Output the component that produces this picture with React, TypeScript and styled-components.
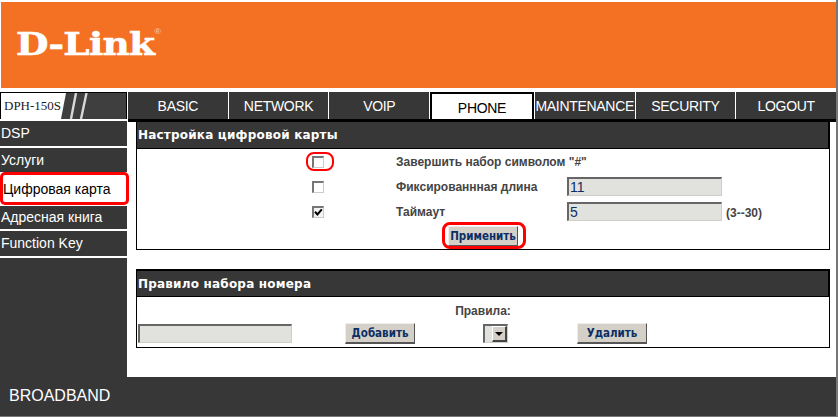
import React from 'react';
import styled, { createGlobalStyle } from 'styled-components';

const Global = createGlobalStyle`
  html, body { margin: 0; padding: 0; background: #fff; }
  body { font-family: "Liberation Sans", Arial, sans-serif; }
  * { box-sizing: border-box; }
`;

const Page = styled.div`
  position: relative;
  width: 838px;
  height: 417px;
  overflow: hidden;
  background: #fff;
  padding-top: 2px;
  border-right: 2px solid #777;
  border-bottom: 1px solid #777;
  display: flex;
  flex-direction: column;
`;

const Banner = styled.header`
  height: 86px;
  margin-left: 1px;
  background: #f47124;
  padding: 24px 0 0 15px;
  flex: none;
`;

const Logo = styled.div`
  color: #fff;
  font-family: "DejaVu Serif", serif;
  font-weight: 700;
  font-size: 32px;
  line-height: 36px;
  letter-spacing: -0.6px;
  display: flex;
  align-items: flex-start;
  transform: scaleX(1.17);
  transform-origin: left top;
  -webkit-text-stroke: 0.6px #fff;
`;

const Reg = styled.span`
  font-family: "Liberation Sans", sans-serif;
  font-weight: 400;
  font-size: 8px;
  line-height: 8px;
  color: #f9c9a6;
  margin-top: 2px;
  -webkit-text-stroke: 0;
`;

const TopRow = styled.div`
  margin-top: 4px;
  display: flex;
  gap: 1px;
  flex: none;
  height: 27px;
`;

const ModelBox = styled.div`
  width: 127px;
  flex: none;
  height: 27px;
  display: flex;
  align-items: center;
  padding-left: 3px;
  border-top: 1px solid #000;
  border-right: 1px solid #000;
  border-left: 1px solid #000;
  background: #fff;
  color: #222;
  font-family: "Liberation Serif", serif;
  font-size: 13px;
  position: relative;
`;

const Slashes = styled.svg`
  position: absolute;
  left: 60px;
  top: 0;
`;

const Tab = styled.div<{ $active?: boolean }>`
  flex: 1;
  min-width: 0;
  background: ${p => (p.$active ? '#fff' : '#373737')};
  color: ${p => (p.$active ? '#000' : '#fff')};
  border: ${p => (p.$active ? '2px solid #000' : 'none')};
  border-bottom: none;
  padding-top: ${p => (p.$active ? '3px' : '0')};
  font-size: 14px;
  letter-spacing: -0.3px;
  display: flex;
  align-items: center;
  justify-content: center;
  white-space: nowrap;
`;

const Body = styled.div`
  flex: 1;
  display: flex;
  min-height: 0;
`;

const Side = styled.nav`
  width: 127px;
  display: flex;
  flex-direction: column;
  gap: 2px;
  padding-top: 2px;
  flex: none;
`;

const SideItem = styled.div<{ $active?: boolean; $h?: number }>`
  height: ${p => p.$h ?? 25}px;
  background: ${p => (p.$active ? '#fff' : '#373737')};
  color: ${p => (p.$active ? '#000' : '#fff')};
  font-size: 14px;
  line-height: 16px;
  padding: ${p => (p.$active ? '7px 0 0 3px' : `${(p.$h ?? 25) === 23 ? 3 : 4}px 0 0 1px`)};
  white-space: nowrap;
`;

const SideFill = styled.div`
  flex: 1;
  background: #373737;
`;

const Main = styled.main`
  width: 708px;
  margin-left: 1px;
  flex: none;
  display: flex;
  flex-direction: column;
  background: linear-gradient(#000 0 3px, #fff 3px);
  padding-left: 8px;
  padding-right: 6px;
`;

const Section = styled.section<{ $h: number; $mt: number }>`
  height: ${p => p.$h}px;
  margin-top: ${p => p.$mt}px;
  border: 1px solid #000;
  flex: none;
  display: flex;
  flex-direction: column;
`;

const SectionHead = styled.h2<{ $top: number; $h: number }>`
  margin: -1px -1px 0 0;
  height: ${p => p.$h}px;
  flex: none;
  background: #373737;
  color: #fff;
  border-top: ${p => p.$top}px solid #000;
  border-right: 2px solid #000;
  border-bottom: 1px solid #000;
  font-family: "DejaVu Sans", sans-serif;
  font-size: 12px;
  font-weight: 700;
  letter-spacing: 0.2px;
  line-height: 26px;
  padding-left: 1px;
`;

const FormRow = styled.div`
  display: grid;
  grid-template-columns: 259px 171px 159px auto;
  align-items: center;
  height: 25px;
`;

const Check = styled.span<{ $on?: boolean }>`
  justify-self: start;
  margin-left: 175px;
  width: 12px;
  height: 12px;
  border-style: solid;
  border-width: 2px 1px 1px 2px;
  border-color: #777 #ccc #ccc #777;
  background: ${p => (p.$on ? '#f4f4f4' : '#fff')};
  display: flex;
  align-items: center;
  justify-content: center;
`;

const Label = styled.span`
  font-size: 12px;
  font-weight: 700;
  color: #444;
  white-space: nowrap;
`;

const Field = styled.div<{ $w: number }>`
  width: ${p => p.$w}px;
  height: 19px;
  background: #e1e1de;
  border-style: solid;
  border-width: 2px 1px 1px 2px;
  border-color: #666 #cfcfca #cfcfca #666;
  color: #0a2f66;
  font-size: 14px;
  line-height: 16px;
  padding-left: 1px;
`;

const Hint = styled.span`
  font-size: 12px;
  font-weight: 700;
  color: #444;
  padding-top: 3px;
`;

const ApplyRow = styled.div`
  display: flex;
  justify-content: center;
  padding-top: 2px;
`;

const Button = styled.div<{ $w: number }>`
  width: ${p => p.$w}px;
  height: 21px;
  background: #d4d0c8;
  border-right: 1px solid #555;
  border-bottom: 2px solid #555;
  border-top: 1px solid #eee;
  border-left: 1px solid #eee;
  color: #0a2f66;
  font-family: "DejaVu Sans", sans-serif;
  font-stretch: condensed;
  font-size: 11.5px;
  font-weight: 700;
  display: flex;
  align-items: center;
  justify-content: center;
  white-space: nowrap;
`;

const RuleCaption = styled.div`
  height: 26px;
  padding-top: 6px;
  line-height: 14px;
  text-align: center;
`;

const RuleRow = styled.div`
  display: grid;
  grid-template-columns: 207px 138px 94px 1fr;
  align-items: center;
  padding-left: 1px;
`;

const Drop = styled.div`
  justify-self: start;
  width: 25px;
  height: 19px;
  background: #e1e1de;
  border-style: solid;
  border-width: 2px 1px 1px 2px;
  border-color: #666 #cfcfca #cfcfca #666;
  display: flex;
  justify-content: flex-end;
`;

const DropArrow = styled.div`
  width: 15px;
  height: 16px;
  background: #d4d0c8;
  border-right: 2px solid #444;
  border-bottom: 2px solid #444;
  border-left: 1px solid #fff;
  border-top: 1px solid #fff;
  display: flex;
  align-items: center;
  justify-content: center;
  &::after {
    content: '';
    border-left: 4px solid transparent;
    border-right: 4px solid transparent;
    border-top: 4px solid #000;
  }
`;

const Footer = styled.footer`
  height: 39px;
  flex: none;
  background: #373737;
  color: #fff;
  font-size: 16px;
  line-height: 18px;
  padding: 10px 0 0 9px;
`;

const Mark = styled.span<{ $x: number; $y: number; $w: number; $h: number; $r: number; $b: number }>`
  position: absolute;
  left: ${p => p.$x}px;
  top: ${p => p.$y}px;
  width: ${p => p.$w}px;
  height: ${p => p.$h}px;
  border: ${p => p.$b}px solid #f00;
  border-radius: ${p => p.$r}px;
`;

const tabs = ['BASIC', 'NETWORK', 'VOIP', 'PHONE', 'MAINTENANCE', 'SECURITY', 'LOGOUT'];

const CheckTick = () => (
  <svg width="9" height="9" viewBox="0 0 9 9">
    <path d="M1 3.8 L3.4 6.4 L7.8 1.4" fill="none" stroke="#000" strokeWidth="2" />
  </svg>
);

export default function App() {
  return (
    <Page>
      <Global />
      <Banner>
        <Logo>
          D-Link<Reg>®</Reg>
        </Logo>
      </Banner>
      <TopRow>
        <ModelBox>
          DPH-150S
          <Slashes width="65" height="26" viewBox="0 0 65 26">
            <path d="M5 0 L0 26 L65 26 L65 0 Z" fill="#3f3f3f" />
            <path d="M15 0 L10 26 M25.5 0 L20 26" stroke="#d8d8d8" strokeWidth="2.4" fill="none" />
          </Slashes>
        </ModelBox>
        {tabs.map(t => (
          <Tab key={t} $active={t === 'PHONE'}>
            {t}
          </Tab>
        ))}
      </TopRow>
      <Body>
        <Side>
          <SideItem>DSP</SideItem>
          <SideItem $h={24}>Услуги</SideItem>
          <SideItem $active $h={30}>
            Цифровая карта
          </SideItem>
          <SideItem $h={23}>Адресная книга</SideItem>
          <SideItem>Function Key</SideItem>
          <SideFill />
        </Side>
        <Main>
          <Section $h={131} $mt={0}>
            <SectionHead $top={3} $h={30}>
              Настройка цифровой карты
            </SectionHead>
            <FormRow>
              <Check />
              <Label>Завершить набор символом "#"</Label>
            </FormRow>
            <FormRow>
              <Check />
              <Label>Фиксированнная длина</Label>
              <Field $w={155}>11</Field>
            </FormRow>
            <FormRow>
              <Check $on>
                <CheckTick />
              </Check>
              <Label>Таймаут</Label>
              <Field $w={155}>5</Field>
              <Hint>(3--30)</Hint>
            </FormRow>
            <ApplyRow>
              <Button $w={70}>Применить</Button>
            </ApplyRow>
          </Section>
          <Section $h={79} $mt={19}>
            <SectionHead $top={2} $h={28}>
              Правило набора номера
            </SectionHead>
            <RuleCaption>
              <Label>Правила:</Label>
            </RuleCaption>
            <RuleRow>
              <Field $w={154} />
              <Button $w={70}>Добавить</Button>
              <Drop>
                <DropArrow />
              </Drop>
              <Button $w={70}>Удалить</Button>
            </RuleRow>
          </Section>
        </Main>
      </Body>
      <Footer>BROADBAND</Footer>
      <Mark $x={0} $y={172} $w={129} $h={33} $r={5} $b={3} />
      <Mark $x={306} $y={152} $w={28} $h={19} $r={8} $b={2} />
      <Mark $x={442} $y={222} $w={84} $h={27} $r={8} $b={3} />
    </Page>
  );
}
